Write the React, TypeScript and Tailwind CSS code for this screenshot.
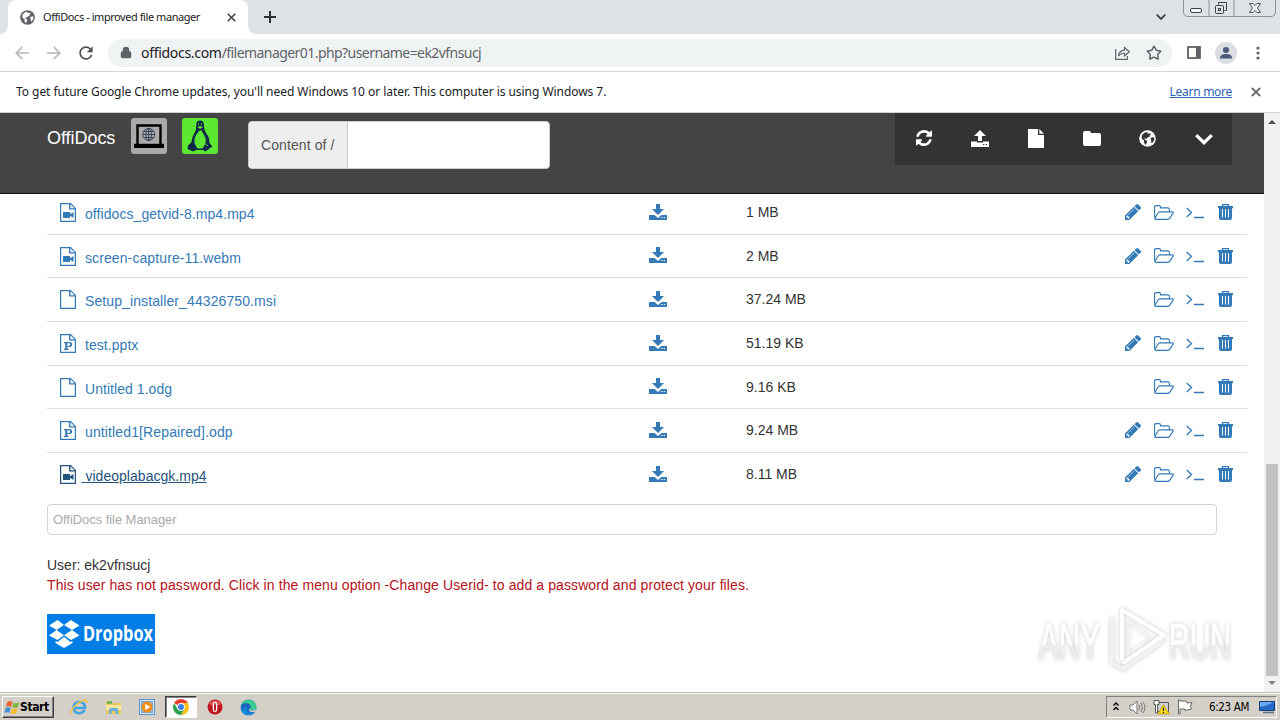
import type { ReactNode } from "react";
import { Lock, Star } from "lucide-react";
import { MdRefresh } from "react-icons/md";

type FileKind = "video" | "plain" | "slides";

const files: {
  name: string;
  kind: FileKind;
  size: string;
  height: string;
  edit: boolean;
  spacing: string;
  active?: boolean;
}[] = [
  { name: "offidocs_getvid-8.mp4.mp4", kind: "video", size: "1 MB", height: "h-[44px]", edit: true, spacing: "tracking-[0.07px]" },
  { name: "screen-capture-11.webm", kind: "video", size: "2 MB", height: "h-[43px]", edit: true, spacing: "tracking-[0.1px]" },
  { name: "Setup_installer_44326750.msi", kind: "plain", size: "37.24 MB", height: "h-[44px]", edit: false, spacing: "tracking-[0.1px]" },
  { name: "test.pptx", kind: "slides", size: "51.19 KB", height: "h-[44px]", edit: true, spacing: "tracking-[0.05px]" },
  { name: "Untitled 1.odg", kind: "plain", size: "9.16 KB", height: "h-[43px]", edit: false, spacing: "tracking-[0.05px]" },
  { name: "untitled1[Repaired].odp", kind: "slides", size: "9.24 MB", height: "h-[44px]", edit: true, spacing: "tracking-[0.13px]" },
  { name: "videoplabacgk.mp4", kind: "video", size: "8.11 MB", height: "h-[43px]", edit: true, spacing: "tracking-[0.03px]", active: true },
];

function FileIcon({ kind }: { kind: FileKind }) {
  return (
    <svg viewBox="0 0 16 19" className="h-[19px] w-4 shrink-0">
      <path d="M.6.6h10l4.8 4.8v13H.6z" fill="none" stroke="currentColor" strokeWidth="1.2" />
      <path d="M9.8.8v5.1h5.5" fill="none" stroke="currentColor" strokeWidth="1.4" />
      {kind === "video" && <path d="M3 9h7v2.200L13.500 9v6L10 12.800V15H3z" fill="currentColor" />}
      {kind === "slides" && (
        <path
          d="M4 8h5.200c2 0 3 1 3 2.500s-1 2.600-3 2.600H7.300v1.700h1.300V16H4v-1.200h1.200V9.200H4zm3.300 1.200v2.700h1.400c1 0 1.500-.500 1.500-1.400s-.500-1.300-1.500-1.300z"
          fill="currentColor"
        />
      )}
    </svg>
  );
}

function CloseIcon({ className }: { className: string }) {
  return (
    <svg viewBox="0 0 10 10" className={className} fill="none" stroke="currentColor" strokeWidth="1.700">
      <path d="M.8.8l8.400 8.400M9.200.8L.8 9.200" />
    </svg>
  );
}

function DownloadIcon() {
  return (
    <svg viewBox="0 0 18 16" className="h-4 w-[18px]" fill="currentColor">
      <path d="M7 0h4v5h4l-6 6-6-6h4z" />
      <path d="M0 11h5.500L9 14l3.500-3H18v5H0z" />
      <path d="M12 13.500h1.300m1.300 0H16" stroke="white" strokeWidth="1" />
    </svg>
  );
}

function UploadIcon() {
  return (
    <svg viewBox="0 0 18 17" className="h-[17px] w-[18px]" fill="currentColor">
      <path d="M9 0l6 6h-4v5H7V6H3z" />
      <path d="M0 11.500h6v1h6v-1h6V17H0z" />
      <path d="M12 14.500h1.300m1.300 0H16" stroke="#333" strokeWidth="1" />
    </svg>
  );
}

function PencilIcon() {
  return (
    <svg viewBox="0 149 1515 1515" className="size-4" fill="currentColor">
      <path d="M363 1536l91-91-235-235-91 91v107h128v128h107zm523-928q0-22-22-22-10 0-17 7l-542 542q-7 7-7 17 0 22 22 22 10 0 17-7l542-542q7-7 7-17zm-54-192l416 416-832 832H0v-416zm683 96q0 53-37 90l-166 166-416-416 166-165q36-38 90-38 53 0 91 38l235 234q37 39 37 91z" />
    </svg>
  );
}

function FolderOpenIcon() {
  return (
    <svg viewBox="0 0 20 15" className="h-[15px] w-5" fill="none" stroke="currentColor" strokeWidth="1.100">
      <path d="M.6 12.800V2Q.6.600 2 .6h3.200Q6.500.600 6.500 2v.9h7.400q1.500 0 1.500 1.500v2.500" />
      <path d="M5.800 6.900h12.600q1.400 0 .7 1.200l-3.300 5q-.8 1.300-2.200 1.300H1.800q-1.600 0-.7-1.300l2.900-5q.6-1.200 1.800-1.200z" />
    </svg>
  );
}

function TerminalIcon() {
  return (
    <svg viewBox="0 0 18 12" className="mt-[2px] h-3 w-[18px]" fill="none" stroke="currentColor" strokeWidth="1.300">
      <path d="M.7 1l4.800 4.500L.7 10M8 10.500h10" />
    </svg>
  );
}

function TrashIcon() {
  return (
    <svg viewBox="0 0 15 16" className="h-4 w-[15px]">
      <path d="M4.500 2V.6h6V2" fill="none" stroke="currentColor" strokeWidth="1.300" />
      <path d="M0 2h15v2.200h-1V14q0 2-2 2H3q-2 0-2-2V4.200H0z" fill="currentColor" />
      <path d="M4.500 5v8.500M7.500 5v8.500M10.500 5v8.500" stroke="white" strokeWidth="1" />
    </svg>
  );
}

function GlobeIcon({ className, land }: { className: string; land: string }) {
  return (
    <svg viewBox="0 0 17 17" className={className}>
      <circle cx="8.500" cy="8.500" r="8.300" fill="currentColor" />
      <path d="M3.500 4.500L6 2.200l3 .3-.5 1.500 2-.8 1.700 1-1.700 1.300.3 1.300-2 .4L7.500 9 6 8.200 5.200 9l1.600 1 1.400 1.300-.7 2.200-1 1.500L5 12.500l.2-2L3 9 2.600 6z" fill={land} />
      <path d="M11.500 8l3-1 1 2-1.700 3.500-1.300.5-.4-2.500z" fill={land} />
    </svg>
  );
}

function Browser() {
  return (
    <header className="shrink-0 font-['Noto_Sans',sans-serif] text-[#202124]">
      <div className="flex h-[34px] bg-[#dee1e6]">
        <div className="flex w-2 bg-white">
          <div className="w-2 rounded-br-lg bg-[#dee1e6]" />
        </div>
        <div className="flex w-60 items-center rounded-t-lg bg-white pl-3">
          <GlobeIcon className="size-[15px] text-[#5f6368]" land="#fff" />
          <span className="ml-[8px] w-[173px] text-[11px] tracking-[-0.44px] whitespace-nowrap">OffiDocs - improved file manager</span>
          <CloseIcon className="ml-[11px] size-[9px] text-[#3c4043]" />
        </div>
        <div className="flex w-2 bg-white">
          <div className="w-2 rounded-bl-lg bg-[#dee1e6]" />
        </div>
        <svg viewBox="0 0 12 12" className="mt-[11px] ml-[8px] size-3" fill="none" stroke="#2c2f33" strokeWidth="2">
          <path d="M6 0v12M0 6h12" />
        </svg>
        <svg viewBox="0 0 10 6" className="mt-[14px] mr-[17px] ml-auto h-[6px] w-[10px]" fill="none" stroke="#3c4043" strokeWidth="1.800">
          <path d="M.7.7L5 5 9.300.7" />
        </svg>
        <div className="mr-[4px] flex h-[17px] w-[93px] rounded-b-[5px] border border-t-0 border-[#8c9097] text-[#3c4043]">
          <svg viewBox="0 0 91 16" className="h-4 w-[91px]" fill="none" stroke="currentColor">
            <path d="M25 0v16M50 0v16" stroke="#8c9097" />
            <rect x="6.500" y="8.500" width="11" height="4" rx="1.500" fill="#f4f5f7" />
            <path d="M34.500 4.500V2.500h8v8h-2" />
            <rect x="31.500" y="5.500" width="8" height="8" rx="1" />
            <rect x="34.500" y="8.500" width="2" height="2" />
            <path d="M65.500 3.500h3.500l2 2 2-2h3.500L73.500 8l3 4.500H73l-2-2-2 2h-3.500l3-4.500z" fill="#f4f5f7" strokeWidth=".9" />
          </svg>
        </div>
      </div>

      <div className="flex h-[37px] items-center bg-white pr-[14px] pl-[15px]">
        <svg viewBox="0 0 14 14" className="size-[14px]" fill="none" stroke="#b5b7ba" strokeWidth="1.700">
          <path d="M14 7H1.500M7.200 1L1.200 7l6 6" />
        </svg>
        <svg viewBox="0 0 14 14" className="ml-[18px] size-[14px]" fill="none" stroke="#b5b7ba" strokeWidth="1.700">
          <path d="M0 7h12.500M6.800 1l6 6-6 6" />
        </svg>
        <MdRefresh className="ml-[15px] size-5 text-[#4d5156]" />
        <div className="ml-[12px] flex h-[28px] w-[1064px] items-center rounded-full bg-[#f0f3f4] pr-[10px] pl-[12px]">
          <Lock className="h-[13px] w-3 fill-[#5f6368] text-[#5f6368]" strokeWidth={3} />
          <span className="ml-[9px] text-[14px] tracking-[-0.56px] whitespace-nowrap text-[#5f6368]">
            <span className="tracking-[-0.3px] text-[#202124]">offidocs.com</span>/filemanager01.php?username=ek2vfnsucj
          </span>
          <svg viewBox="0 0 15 14" className="mr-[16px] ml-auto h-[14px] w-[15px]" fill="none" stroke="#5f6368" strokeWidth="1.200">
            <path d="M.7 3v10.300h11.600V10" />
            <path d="M3.500 10q.5-5.500 6-5.800V1.500l4.800 4.200-4.800 4.200V7.300Q5.500 7 3.500 10z" />
          </svg>
          <Star className="size-4 text-[#5f6368]" strokeWidth={2.3} />
        </div>
        <svg viewBox="0 0 14 13" className="ml-[15px] h-[13px] w-[14px]">
          <rect x="1" y="1" width="12" height="11" fill="none" stroke="#5f6368" strokeWidth="1.800" />
          <rect x="9" y="1" width="4" height="11" fill="#5f6368" />
        </svg>
        <svg viewBox="0 0 22 22" className="ml-[14px] size-[22px]">
          <circle cx="11" cy="11" r="11" fill="#dadde2" />
          <circle cx="11" cy="8" r="3" fill="#4a5a78" />
          <path d="M5 16q0-4 6-4t6 4v.5H5z" fill="#4a5a78" />
        </svg>
        <svg viewBox="0 0 4 14" className="ml-[19px] h-[14px] w-1" fill="#5f6368">
          <circle cx="2" cy="2" r="1.600" />
          <circle cx="2" cy="7" r="1.600" />
          <circle cx="2" cy="12" r="1.600" />
        </svg>
      </div>

      <div className="flex h-[42px] items-center border-y border-[#d2d4d6] bg-white pr-[19px] pb-px pl-4 text-[12px]">
        <span className="tracking-[-0.05px] whitespace-nowrap">
          To get future Google Chrome updates, you'll need Windows 10 or later. This computer is using Windows 7.
        </span>
        <span className="ml-auto tracking-[-0.28px] text-[#2a62b8] underline">Learn more</span>
        <CloseIcon className="mt-px ml-[19px] size-[10px] text-[#5f6368]" />
      </div>
    </header>
  );
}

function HeaderButton({ children }: { children: ReactNode }) {
  return <div className="flex h-[50px] w-[56.25px] items-center justify-center">{children}</div>;
}

function PageHeader() {
  return (
    <div className="flex h-[81px] shrink-0 border-b border-[#101010] bg-[#444] pl-[47px]">
      <div className="mt-[12px] w-[84px] text-[18px] leading-[26px] tracking-[-0.05px] text-white">OffiDocs</div>
      <div className="mt-[5px] flex size-9 items-center justify-center rounded-[3px] bg-[#aaa]">
        <svg viewBox="0 0 32 26" className="h-[26px] w-8">
          <path d="M4.500 21V2.500h23V21" fill="none" stroke="#000" strokeWidth="2.400" />
          <path d="M1 20.800h30V25H1z" />
          <g fill="none" stroke="#2b3c55" strokeWidth=".9">
            <circle cx="15.700" cy="11.500" r="6" />
            <ellipse cx="15.700" cy="11.500" rx="2.800" ry="6" />
            <path d="M9.700 11.500h12M15.700 5.500v12M10.500 8.500h10.400M10.500 14.500h10.400" />
          </g>
        </svg>
      </div>
      <div className="mt-[5px] ml-[15px] flex size-9 items-center justify-center rounded-[3px] bg-[#5ce832]">
        <svg viewBox="0 0 28 32" className="h-8 w-7">
          <path d="M14 .5q-3.800 0-3.800 4.500.3 5-1.700 8-2.800 4-3 9L2 25.500 1.500 29l5.500 2.500 3-1.500h7l2.500 1.500 4-3 3-2-3-3.500q0-6-3.500-10-2-3-2-7.500 0-5-4-5z" fill="#10294a" />
          <path d="M13.500 10.500h2q2.500 4 4 7.500 1 3.500-.5 6l-2 4q-3 1-6 0l-2.500-5q-.5-6 3-10z" fill="#5ce832" />
          <path d="M11.500 7L14 6l3 1-3 2z" fill="#5ce832" />
          <path d="M12.500 3.500V5M15.500 3.500V5M19 23.500l3 2.500" stroke="#5ce832" strokeWidth=".9" />
        </svg>
      </div>
      <div className="mt-[8px] ml-[30px] flex h-12 w-[302px] rounded border border-[#ccc] bg-white">
        <div className="flex w-[99px] items-center rounded-l-[3px] border-r border-[#ccc] bg-[#eee] pl-[12px] text-[14px] tracking-[0.1px] text-[#555]">
          Content of /
        </div>
      </div>
      <div className="ml-[345px] flex h-[52px] w-[337px] bg-[#333] pl-[0.500px] text-white">
        <HeaderButton>
          <svg viewBox="0 0 1536 1536" className="size-4" fill="currentColor">
            <path d="M1511 928q0 5-1 7-64 268-268 434.500T764 1536q-146 0-282.500-55T238 1324l-129 129q-19 19-45 19t-45-19T0 1408V960q0-26 19-45t45-19h448q26 0 45 19t19 45-19 45l-137 137q71 66 161 102t187 36q134 0 250-65t186-179q11-17 53-117 8-23 30-23h192q13 0 22.500 9.500t9.500 22.500zm25-800v448q0 26-19 45t-45 19h-448q-26 0-45-19t-19-45 19-45l138-138Q969 256 768 256q-134 0-250 65T332 500q-11 17-53 117-8 23-30 23H50q-13 0-22.500-9.500T18 608v-7q65-268 270-434.500T768 0q146 0 284 55.500T1297 212l130-129q19-19 45-19t45 19 19 45z" />
          </svg>
        </HeaderButton>
        <HeaderButton>
          <UploadIcon />
        </HeaderButton>
        <HeaderButton>
          <svg viewBox="0 0 16 19" className="h-[19px] w-4" fill="currentColor">
            <path d="M0 0h10v6h6v13H0zM11.300 0L16 4.800h-4.700z" />
          </svg>
        </HeaderButton>
        <HeaderButton>
          <svg viewBox="0 0 18 15" className="h-[15px] w-[18px]" fill="currentColor">
            <path d="M0 2q0-2 2-2h4q2 0 2 2h8q2 0 2 2v9q0 2-2 2H2q-2 0-2-2z" />
          </svg>
        </HeaderButton>
        <HeaderButton>
          <GlobeIcon className="size-[17px]" land="#333" />
        </HeaderButton>
        <HeaderButton>
          <svg viewBox="0 0 18 11" className="mt-[3px] h-[11px] w-[18px]" fill="none" stroke="currentColor" strokeWidth="3.200">
            <path d="M1.200 1.200L9 8.700l7.800-7.500" />
          </svg>
        </HeaderButton>
      </div>
    </div>
  );
}

function FileTable() {
  return (
    <div className="-mt-[3px] mr-[17px] ml-[47px] text-[14px] leading-5">
      {files.map((file) => (
        <div key={file.name} className={`flex items-center border-b border-[#ddd] pl-[13px] last:border-b-0 ${file.height}`}>
          <div className={`flex w-[589px] items-center ${file.active ? "text-[#23527c]" : "text-[#337ab7]"}`}>
            <FileIcon kind={file.kind} />
            {file.active ? (
              <span className={`mt-[3px] ml-[5.500px] whitespace-pre underline ${file.spacing}`}> {file.name}</span>
            ) : (
              <span className={`mt-[3px] ml-[9px] ${file.spacing}`}>{file.name}</span>
            )}
          </div>
          <div className="mb-[2px] w-[97px] text-[#337ab7]">
            <DownloadIcon />
          </div>
          <div className="mb-px text-[#333]">{file.size}</div>
          <div className="mr-[14px] mb-px ml-auto flex items-center text-[#337ab7]">
            {file.edit && <PencilIcon />}
            <div className="ml-[13px]">
              <FolderOpenIcon />
            </div>
            <div className="ml-[12px]">
              <TerminalIcon />
            </div>
            <div className="ml-[14px]">
              <TrashIcon />
            </div>
          </div>
        </div>
      ))}
    </div>
  );
}

function Watermark() {
  return (
    <svg viewBox="0 0 210 76" className="absolute right-[24px] bottom-[14px] h-[76px] w-[210px] overflow-visible drop-shadow-[0_0_2px_rgba(0,0,0,0.2)]">
      <defs>
        <linearGradient id="fade" x1="0" y1="0" x2="0" y2="1">
          <stop offset="55%" stopColor="#fff" />
          <stop offset="56%" stopColor="#ededed" />
        </linearGradient>
      </defs>
      <g fill="url(#fade)" stroke="url(#fade)" className="font-['Liberation_Sans_Narrow','Liberation_Sans',sans-serif] text-[50px]">
        <text x="9" y="57" textLength="61" lengthAdjust="spacingAndGlyphs">ANY</text>
        <text x="139" y="57" textLength="62" lengthAdjust="spacingAndGlyphs">RUN</text>
      </g>
      <g fill="none" strokeWidth="4" strokeLinejoin="round">
        <path d="M82 15v46l11 6 41-29" stroke="#f1f1f1" />
        <path d="M92 58V8l42 25-41 28" stroke="#fff" />
        <path d="M98 20v32l24-16z" stroke="#f3f3f3" strokeWidth="2" />
      </g>
    </svg>
  );
}

function ScrollBar() {
  return (
    <div className="flex w-4 shrink-0 flex-col items-center bg-[#f1f1f1]">
      <svg viewBox="0 0 8 4" className="mt-[7px] h-1 w-2">
        <path d="M0 4l4-4 4 4z" fill="#505050" />
      </svg>
      <div className="mt-auto h-[212px] w-[12px] bg-[#c1c1c1]" />
      <svg viewBox="0 0 8 4" className="mt-[5px] mb-[7px] h-1 w-2">
        <path d="M0 0l4 4 4-4z" fill="#808080" />
      </svg>
    </div>
  );
}

function Taskbar() {
  return (
    <footer className="flex h-7 shrink-0 items-center border-t border-[#bcb8b0] bg-[#d4d0c8] pt-px pr-[3px] pl-[2px] font-['DejaVu_Sans_Condensed','DejaVu_Sans',sans-serif] text-black shadow-[inset_0_1px_#fff]">
      <div className="flex h-[22px] w-[52px] items-center border border-t-white border-r-[#404040] border-b-[#404040] border-l-white pl-px shadow-[inset_-1px_-1px_#808080]">
        <svg viewBox="0 0 16 15" className="h-[15px] w-4">
          <path d="M3.500 2q3-2 5 0L7 7Q4.500 5.500 2 7z" fill="#e8632b" />
          <path d="M9.500 2.500q3 1.500 6-.5L14 7q-3 1.800-5.700.3z" fill="#7fb842" />
          <path d="M1.700 8q3-1.700 5 0l-1.500 5q-2.500-1.500-5 0z" fill="#4690d6" />
          <path d="M8 8.300q2.500 1.500 5.700-.3l-1.500 5q-3 2-5.700.3z" fill="#f5bd2b" />
        </svg>
        <span className="text-[12px] font-bold tracking-[-0.4px]">Start</span>
      </div>

      <svg viewBox="0 0 18 18" className="ml-[16px] size-[18px]">
        <path d="M14.500 12q-1.500 3.200-5.300 3.200Q3.700 15 3.700 9.500T9.200 4Q15 4 15 10H5" fill="none" stroke="#43a5df" strokeWidth="2.600" />
        <path d="M1.500 16Q0 13 5 8t10-6q3 0 1.500 3" fill="none" stroke="#f0c240" strokeWidth="1.300" />
      </svg>
      <svg viewBox="0 0 17 16" className="ml-[17px] h-4 w-[17px]">
        <path d="M1 3h6l1 1h8v11H1z" fill="#e8c65a" />
        <path d="M2 2h5v3H2z" fill="#75b552" />
        <path d="M1 6h15v5H1z" fill="#f8e7a0" />
        <path d="M4 15v-4q0-2 2-2h5q2 0 2 2v4h-2.500v-3h-4v3z" fill="#65afe0" />
      </svg>
      <svg viewBox="0 0 16 16" className="ml-[17px] size-4">
        <rect x=".5" y=".5" width="15" height="15" fill="#cfe4f5" stroke="#5c94c4" />
        <rect x="2.500" y="2.500" width="11" height="11" fill="#8ebde2" stroke="#7aa8d0" />
        <circle cx="8" cy="8" r="5.500" fill="#f28a16" />
        <path d="M6.200 4.800v6.400L11.300 8z" fill="#fff" />
      </svg>
      <div className="ml-[10px] flex h-[22px] w-[32px] items-center justify-center border border-t-[#404040] border-r-white border-b-white border-l-[#404040] bg-white shadow-[inset_1px_1px_#808080]">
        <svg viewBox="0 0 16 16" className="size-4">
          <path d="M8 8L1.100 4A8 8 0 0 1 14.900 4z" fill="#e34133" />
          <path d="M8 8l3.500 2L8 16A8 8 0 0 0 14.900 4H8z" fill="#fbc116" />
          <path d="M8 8l-3.500 2L1.100 4A8 8 0 0 0 8 16l3.500-6z" fill="#2da14c" />
          <circle cx="8" cy="8" r="3.900" fill="#fff" />
          <circle cx="8" cy="8" r="3" fill="#3f7fe8" />
        </svg>
      </div>
      <svg viewBox="0 0 16 16" className="ml-[10px] size-4">
        <circle cx="8" cy="8" r="7.500" fill="#bd1620" />
        <path d="M2 5a7 7 0 0 1 12 0q-6 3-12 0z" fill="#e05a58" />
        <ellipse cx="8" cy="8" rx="2.400" ry="5.200" fill="#fff" />
        <ellipse cx="8" cy="8" rx="1" ry="4.300" fill="#b31820" />
      </svg>
      <svg viewBox="0 0 17 17" className="ml-[17px] size-[17px]">
        <circle cx="8.500" cy="8.500" r="8" fill="#1689d8" />
        <path d="M1 6.500A8 8 0 0 1 16.500 8q0 4-5 3.500Q9 11 10 9.500 11 6 7 5.500q-3 0-6 1z" fill="#3ccb8e" />
        <path d="M1 6.500q4-4 8-1.500 3 2 1 4.500-.5 1.500 1.500 2 2.500.3 4-.8Q13 15.500 9 13.500 5.500 11.500 7 8 3 8 3 12 .5 9 1 6.500z" fill="#1a66bd" />
        <path d="M10 9.500q-.5 2 3 2.100 2 0 3.500-1.600l-.7 2.500q-3 1.200-5.500.2-2.300-1.200-.3-3.200z" fill="#d4d0c8" />
      </svg>

      <div className="ml-auto flex h-[22px] w-[171px] items-center border border-t-[#808080] border-r-white border-b-white border-l-[#808080] pl-[6px]">
        <svg viewBox="0 0 6 9" className="mb-px h-[9px] w-[6px]" fill="none" stroke="#000" strokeWidth="1.400">
          <path d="M.5 3.500L3 1l2.500 2.500M.5 8L3 5.500 5.500 8" />
        </svg>
        <svg viewBox="0 0 17 15" className="ml-[10px] h-[15px] w-[17px]" fill="#f6f6f6" stroke="#777">
          <path d="M1 5h3l4-4v13L4 10H1z" />
          <path d="M10 5q1.500 2.500 0 5M12 3q3 4.500 0 9M14 2q4 5.500 0 11" fill="none" />
        </svg>
        <svg viewBox="0 0 17 16" className="ml-[7px] h-4 w-[17px]">
          <path d="M4.500 3.500h11v9h-11z" fill="#cfd3d8" stroke="#555" />
          <path d="M1 1.500h5v4H4.500V14H2.500V5.500H1z" fill="#fff" stroke="#555" />
          <path d="M10.500 5.500l5.800 9.500H4.700z" fill="#ffda1a" stroke="#b79500" strokeWidth=".7" />
          <path d="M10.500 8.500v3.500m0 1v1.200" stroke="#222" strokeWidth="1.300" />
        </svg>
        <svg viewBox="0 0 16 16" className="ml-[7px] size-4" fill="#fff" stroke="#666">
          <path d="M1.500 1v14h1.500V10h5v1.500l6.500-1.500-1-3 1.500-3.500-5 .5-1-2H3V1z" />
        </svg>
        <span className="mt-[2px] ml-[16px] text-[11.500px] tracking-[-0.35px] whitespace-nowrap">6:23 AM</span>
        <svg viewBox="0 0 16 14" className="mr-px ml-auto h-[14px] w-4">
          <path d="M.5 1.500h15v9H.5z" fill="#2467c4" stroke="#183f78" />
          <path d="M1 2h14l-9 4-5 1z" fill="#6ba8ec" />
          <path d="M4 12.500h11" stroke="#5b7286" strokeWidth="1.500" />
        </svg>
      </div>
    </footer>
  );
}

export default function App() {
  return (
    <div className="flex h-[720px] w-[1280px] flex-col overflow-hidden bg-white">
      <Browser />
      <div className="flex min-h-0 flex-1">
        <main className="relative flex min-w-0 flex-1 flex-col font-['Liberation_Sans',sans-serif]">
          <PageHeader />
          <FileTable />
          <div className="mt-[8px] ml-[47px] flex h-[31px] w-[1170px] shrink-0 items-center rounded-[4px] border border-[#d5d5d5] pl-[5px] text-[13px] tracking-[-0.06px] text-[#aaa]">
            OffiDocs file Manager
          </div>
          <div className="mt-[20px] ml-[47px] text-[14px] leading-5 whitespace-nowrap">
            <p className="text-[#333]">User: ek2vfnsucj</p>
            <p className="tracking-[0.1px] text-[#b5121b]">
              This user has not password. Click in the menu option -Change Userid- to add a password and protect your files.
            </p>
          </div>
          <div className="mt-[19px] ml-[47px] h-10 w-[108px] bg-[#007ee5]">
            <svg viewBox="0 0 108 40" className="h-10 w-[108px] overflow-visible" fill="#fff">
              <path d="M10.500 6l6.500 5-7.500 5L2 11.500zM24 6l8.500 5.500L25 16l-8-5zM2 21.500L9.500 16l7.500 5.300-6.500 4.700zM32.500 21.500L25 16l-8 5.300L24 26zM17 22.800l6.500 5.200 2-1v2L17 34l-8.500-5v-2l2 1z" />
              <text x="36" y="27" textLength="70" lengthAdjust="spacingAndGlyphs" className="font-['Open_Sans',sans-serif] text-[21px] font-bold">
                Dropbox
              </text>
            </svg>
          </div>
          <Watermark />
        </main>
        <ScrollBar />
      </div>
      <Taskbar />
    </div>
  );
}
